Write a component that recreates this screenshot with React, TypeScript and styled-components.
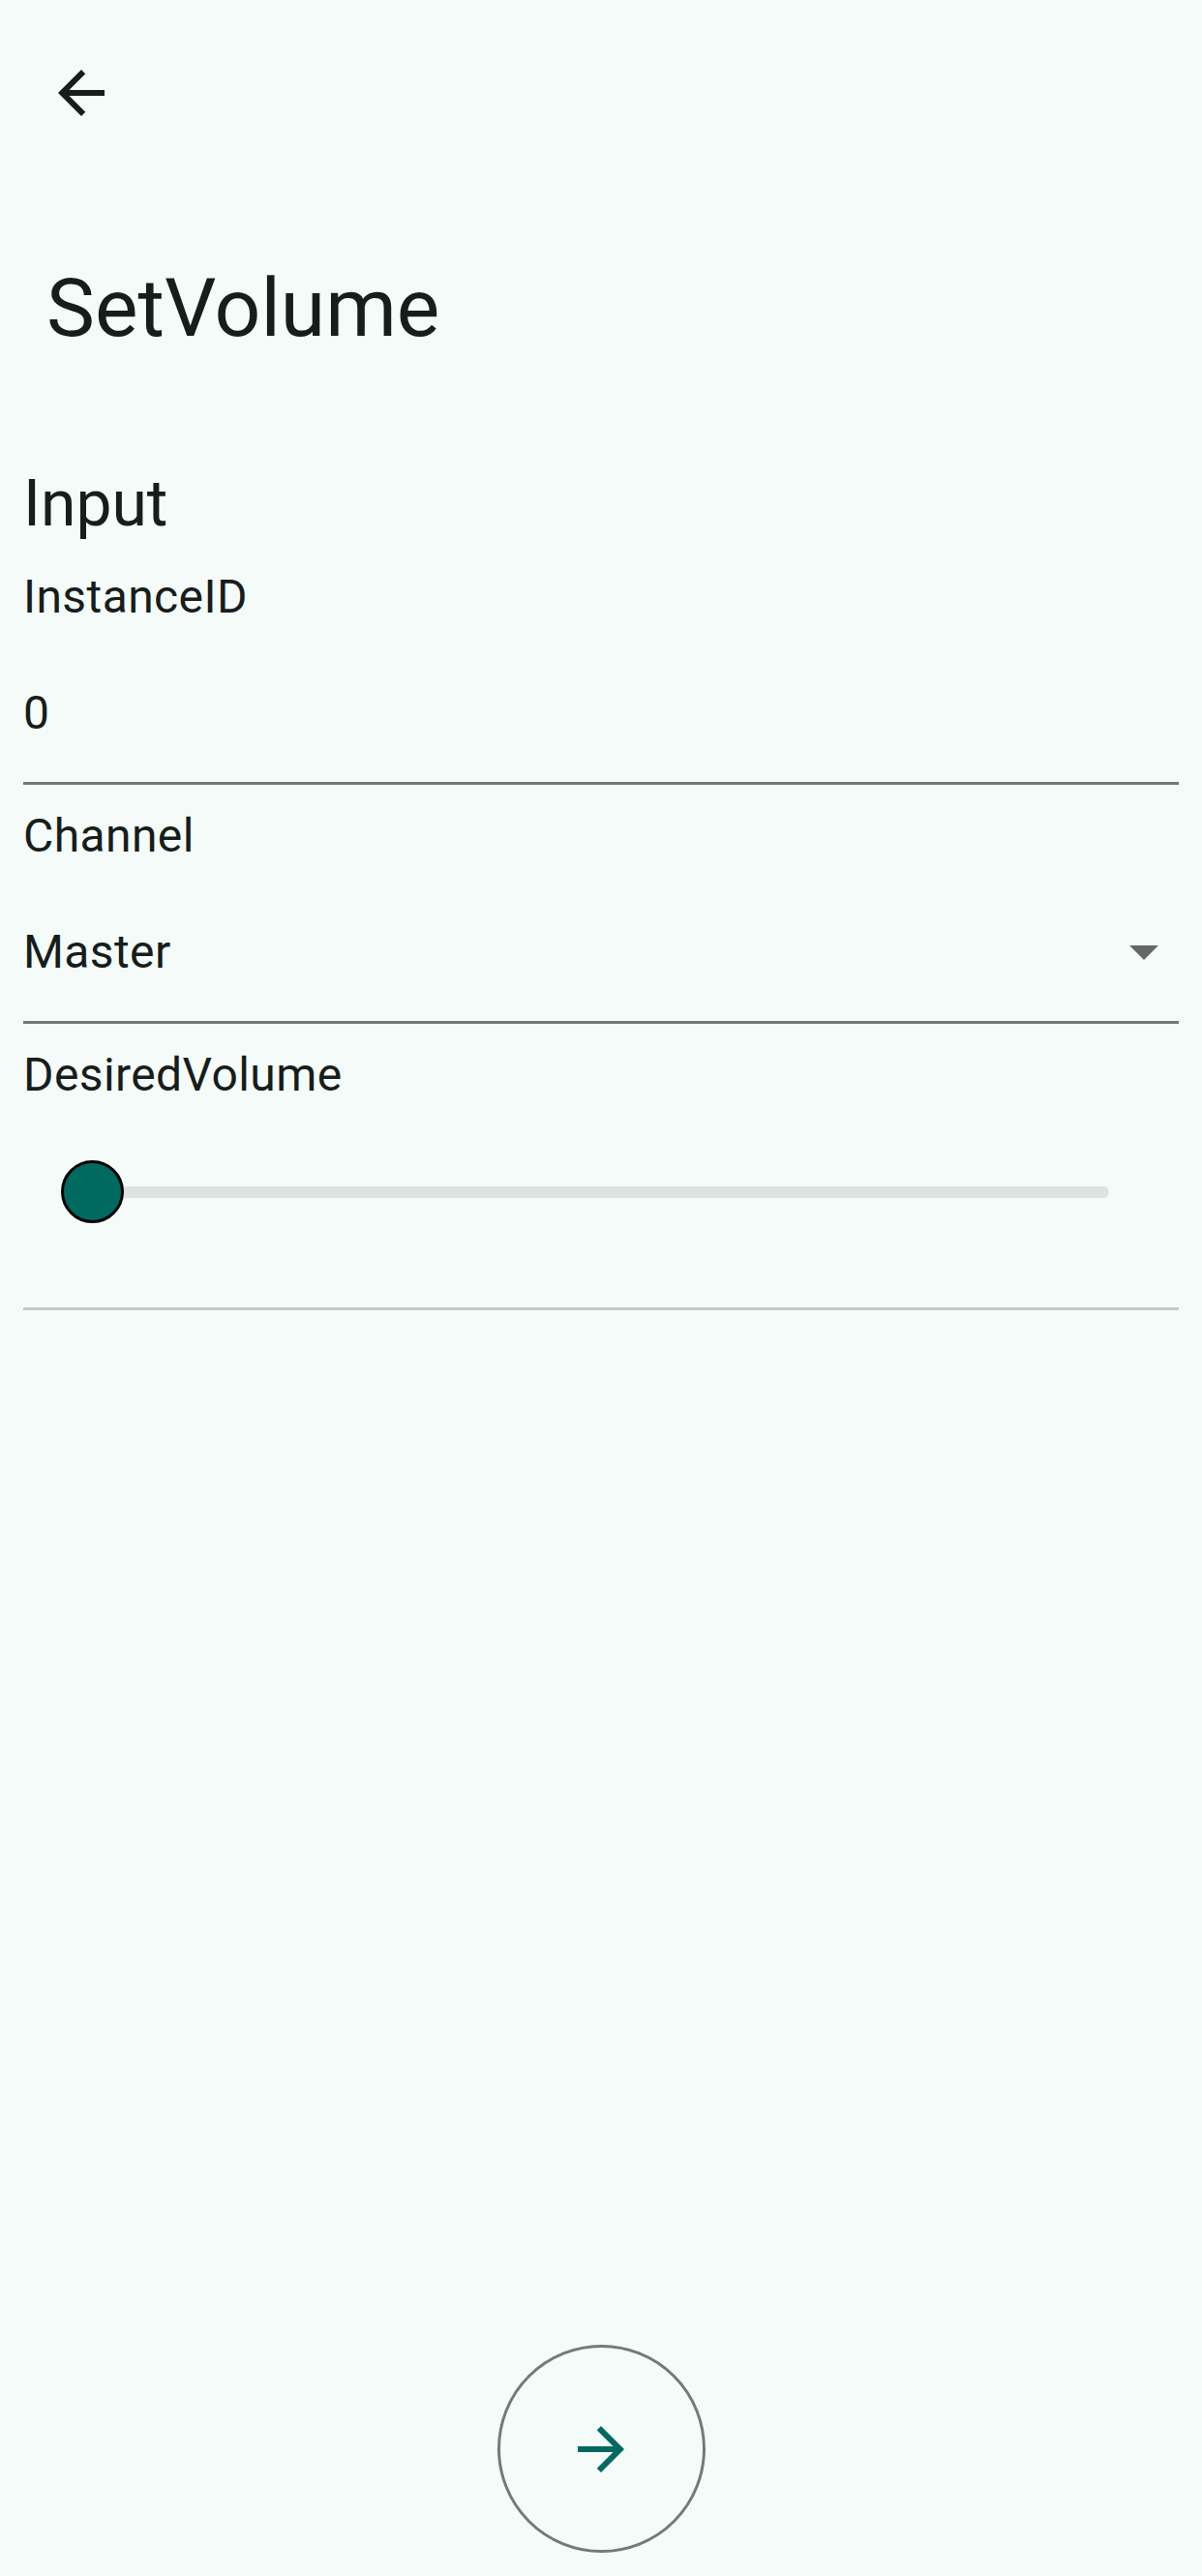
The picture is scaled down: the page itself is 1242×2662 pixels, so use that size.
import React from 'react';
import styled, { createGlobalStyle } from 'styled-components';

const GlobalStyle = createGlobalStyle`
  html, body {
    margin: 0;
    padding: 0;
    background: #f4fbf8;
  }
  body {
    font-family: Roboto, "Noto Sans", "Liberation Sans", sans-serif;
    color: #171d1b;
  }
  * { box-sizing: border-box; }
`;

const Page = styled.div`
  min-height: 2662px;
  display: flex;
  flex-direction: column;
  background: #f4fbf8;
`;

const TopBar = styled.header`
  display: flex;
  align-items: center;
  height: 132px;
  padding: 60px 0 0 48px;
`;

const IconButton = styled.button`
  width: 72px;
  height: 72px;
  padding: 0;
  border: 0;
  background: transparent;
  color: #171d1b;
  display: flex;
  align-items: center;
  justify-content: center;
  svg {
    width: 72px;
    height: 72px;
    display: block;
  }
`;

const Title = styled.h1`
  margin: 133px 0 0;
  padding-left: 48px;
  font-size: 84px;
  line-height: 108px;
  font-weight: 400;
  color: #171d1b;
`;

const Form = styled.section`
  display: flex;
  flex-direction: column;
  gap: 17px;
  padding: 0 24px;
  margin-top: 106px;
`;

const SectionTitle = styled.h2`
  margin: 0 0 1px;
  font-size: 66px;
  line-height: 84px;
  font-weight: 400;
  color: #171d1b;
`;

const Field = styled.div`
  display: flex;
  flex-direction: column;
`;

const Label = styled.label`
  font-size: 48px;
  line-height: 72px;
  letter-spacing: 0.4px;
  color: #171d1b;
  white-space: nowrap;
`;

const Control = styled.div<{ $muted?: boolean }>`
  display: flex;
  align-items: center;
  justify-content: space-between;
  padding: 48px 0 35px;
  border-bottom: 3px solid ${(p) => (p.$muted ? '#c3cac7' : '#727a77')};
`;

const Value = styled.span`
  font-size: 48px;
  line-height: 72px;
  letter-spacing: 0.4px;
  color: #171d1b;
`;

const DropTriangle = styled.span`
  width: 0;
  height: 0;
  margin-right: 21px;
  border-left: 15px solid transparent;
  border-right: 15px solid transparent;
  border-top: 15px solid #646866;
`;

const SliderControl = styled.div`
  padding: 52px 72px 87px 39px;
  border-bottom: 3px solid #c3cac7;
`;

const SliderRail = styled.div`
  position: relative;
  height: 65px;
  display: flex;
  align-items: center;
`;

const Track = styled.div`
  width: 100%;
  height: 12px;
  border-radius: 6px;
  background: #dde3e0;
`;

const Thumb = styled.div`
  position: absolute;
  top: 0;
  width: 65px;
  height: 65px;
  border-radius: 50%;
  border: 3px solid #000;
  background: #006a60;
`;

const Footer = styled.footer`
  margin-top: auto;
  display: flex;
  justify-content: center;
  padding-bottom: 24px;
`;

const Fab = styled.button`
  width: 215px;
  height: 215px;
  border-radius: 50%;
  border: 3px solid #737a77;
  background: transparent;
  color: #006a60;
  display: flex;
  align-items: center;
  justify-content: center;
  padding: 0;
  svg {
    width: 72px;
    height: 72px;
    display: block;
  }
`;

const BackIcon = () => (
  <svg viewBox="0 0 24 24" fill="currentColor" aria-hidden="true">
    <path d="M20 11H7.83l5.59-5.59L12 4l-8 8 8 8 1.41-1.41L7.83 13H20v-2z" />
  </svg>
);

const ForwardIcon = () => (
  <svg viewBox="0 0 24 24" fill="currentColor" aria-hidden="true">
    <path d="M12 4l-1.41 1.41L16.17 11H4v2h12.17l-5.58 5.59L12 20l8-8z" />
  </svg>
);

export default function App() {
  const volume = 0;
  return (
    <>
      <GlobalStyle />
      <Page>
        <TopBar>
          <IconButton aria-label="Back">
            <BackIcon />
          </IconButton>
        </TopBar>
        <Title>SetVolume</Title>
        <Form>
          <SectionTitle>Input</SectionTitle>
          <Field>
            <Label>InstanceID</Label>
            <Control>
              <Value>0</Value>
            </Control>
          </Field>
          <Field>
            <Label>Channel</Label>
            <Control>
              <Value>Master</Value>
              <DropTriangle />
            </Control>
          </Field>
          <Field>
            <Label>DesiredVolume</Label>
            <SliderControl>
              <SliderRail>
                <Track />
                <Thumb style={{ left: `calc(${volume}% - ${(volume / 100) * 65}px)` }} />
              </SliderRail>
            </SliderControl>
          </Field>
        </Form>
        <Footer>
          <Fab aria-label="Next">
            <ForwardIcon />
          </Fab>
        </Footer>
      </Page>
    </>
  );
}
